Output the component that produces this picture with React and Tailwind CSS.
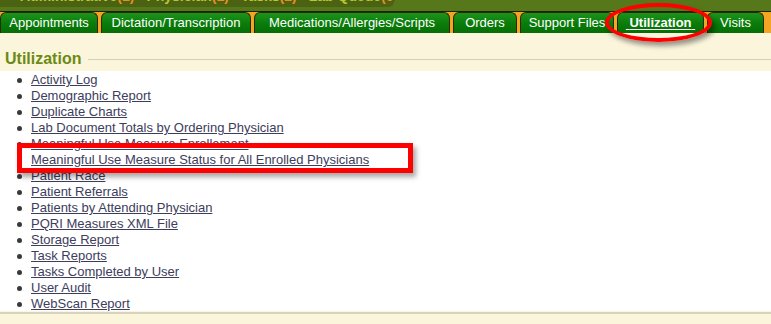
const tabs = [
  { label: 'Appointments', w: 98 },
  { label: 'Dictation/Transcription', w: 150 },
  { label: 'Medications/Allergies/Scripts', w: 196 },
  { label: 'Orders', w: 64 },
  { label: 'Support Files', w: 94 },
  { label: 'Utilization', w: 87, active: true },
  { label: 'Visits', w: 57 },
];

const reports = [
  'Activity Log',
  'Demographic Report',
  'Duplicate Charts',
  'Lab Document Totals by Ordering Physician',
  'Meaningful Use Measure Enrollement',
  'Meaningful Use Measure Status for All Enrolled Physicians',
  'Patient Race',
  'Patient Referrals',
  'Patients by Attending Physician',
  'PQRI Measures XML File',
  'Storage Report',
  'Task Reports',
  'Tasks Completed by User',
  'User Audit',
  'WebScan Report',
];

const queues = [
  ['Administrative', '1'],
  ['Physician', '1'],
  ['Tasks', '2'],
  ['Lab Queue', '0'],
  ['Scans', '2'],
];

export default function App() {
  return (
    <div className="relative w-[771px] h-[324px] overflow-hidden bg-white font-['Liberation_Sans',Arial,sans-serif]">
      {/* top status strip, mostly cut off above the window */}
      <div className="relative h-[11px] bg-[#56771a] overflow-hidden">
        <div className="flex h-[7px] w-[395px] items-start overflow-hidden rounded-br-[8px] bg-[#4a6212] pl-[20px]">
          <div className="-mt-[12px] flex gap-[12px] whitespace-nowrap text-[14px] font-bold leading-[16px]">
            {queues.map(([name, n]) => (
              <span key={name} className="text-[#b9c92c]">
                {name}<span className="text-[#e8901c]">({n})</span>
              </span>
            ))}
          </div>
        </div>
      </div>
      <div className="h-[1px] bg-[#1d2400]" />

      {/* tabs */}
      <div className="flex h-[21px] gap-[3px] bg-[#f5a524]">
        {tabs.map((t) => (
          <div
            key={t.label}
            style={{ width: t.w }}
            className="flex h-[21px] shrink-0 items-center justify-center rounded-t-[6px] border border-b-0 border-[#2a2a00] bg-gradient-to-b from-[#1c941c] via-[#0a7d0a] to-[#066e06] text-[13px] text-white"
          >
            {t.active ? (
              <span className="font-bold underline underline-offset-[2px]">&nbsp;{t.label}&nbsp;</span>
            ) : (
              t.label
            )}
          </div>
        ))}
      </div>

      {/* heading */}
      <div className="flex h-[38px] items-end bg-[#fbf5dc] pb-[3px]">
        <div className="flex w-full items-center">
          <span className="pl-[5px] pr-[7px] text-[16px] font-bold leading-[18px] text-[#6b8a14]">Utilization</span>
          <div className="h-[1px] flex-1 bg-[#d4cfba]" />
        </div>
      </div>

      {/* report list */}
      <ul className="h-[240px] bg-white pt-[1px]">
        {reports.map((r) => (
          <li key={r} className="flex h-[16px] items-center">
            <span className="ml-[17px] mr-[9px] h-[5px] w-[5px] rounded-full bg-[#3a3a3a]" />
            <a className="text-[13px] leading-[16px] text-[#3d3d5c] underline underline-offset-[1px]">{r}</a>
          </li>
        ))}
      </ul>

      <div className="h-[13px] bg-[#fbf5dc] pt-[1px]">
        <div className="h-[2px] bg-[#d8d3c0]" />
      </div>

      {/* annotation overlays */}
      <div className="absolute left-[605px] top-[3px] h-[39px] w-[107px] rounded-[50%] border-[4px] border-[#ff0000] shadow-[3px_4px_5px_rgba(0,0,0,0.4)]" />
      <div className="absolute left-[17px] top-[143px] h-[30px] w-[396px] border-[5px] border-[#ff0000] shadow-[3px_4px_5px_rgba(0,0,0,0.35)]" />
    </div>
  );
}
